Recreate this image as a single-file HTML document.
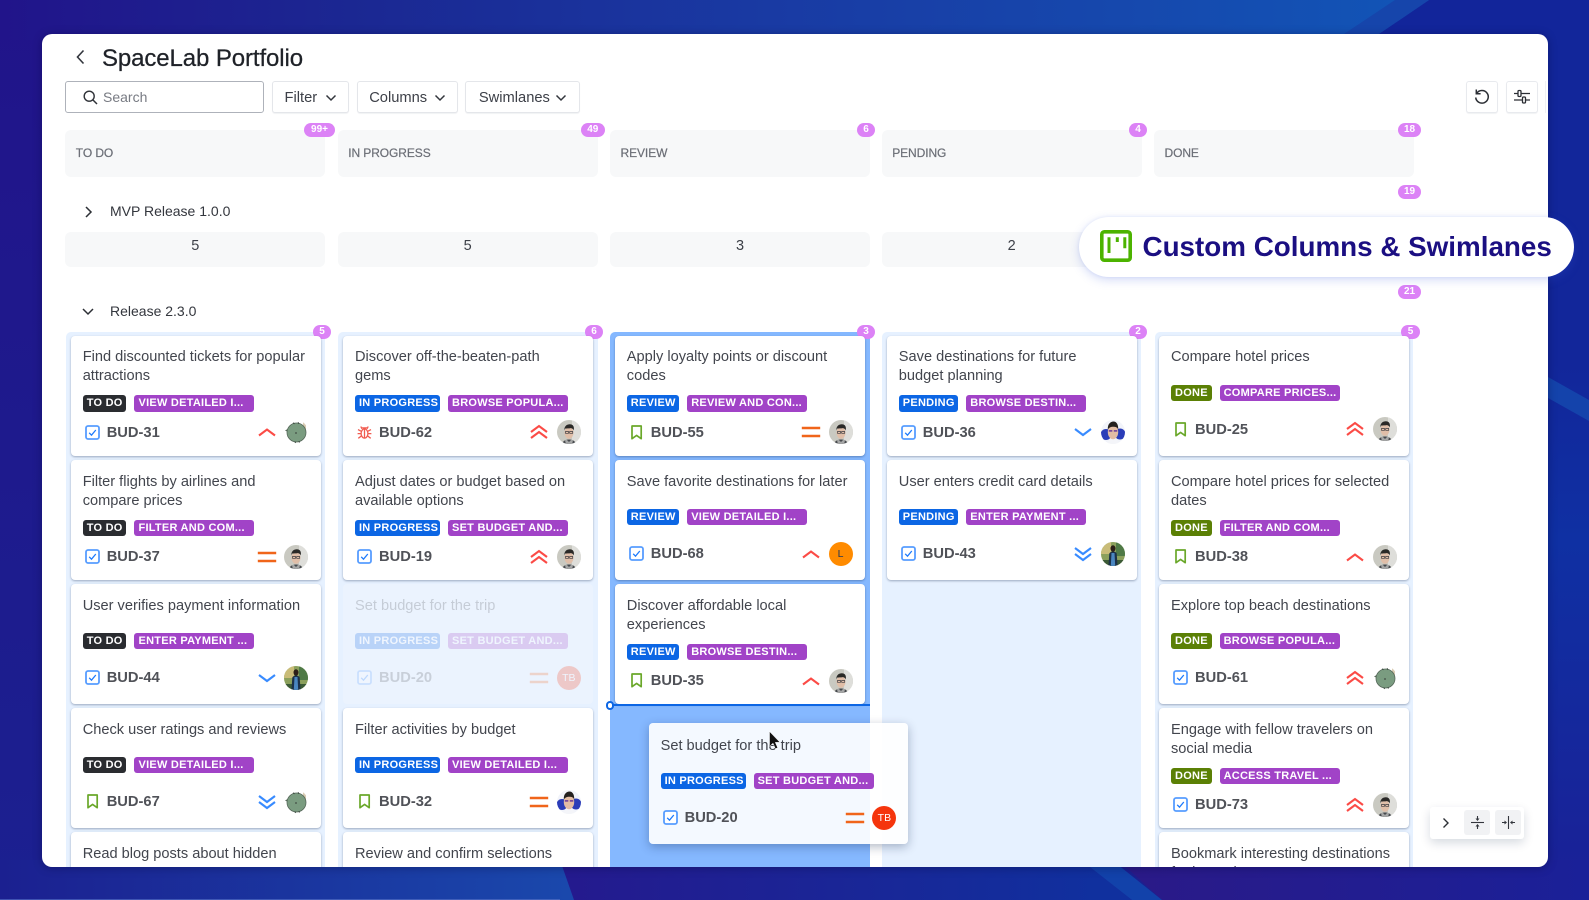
<!DOCTYPE html>
<html lang="en">
<head>
<meta charset="utf-8">
<title>SpaceLab Portfolio</title>
<style>
html,body{margin:0;padding:0;width:1589px;height:900px;overflow:hidden;background:#1a2090;font-family:"Liberation Sans",sans-serif}
#bg{position:absolute;left:0;top:0}
#panel{position:absolute;left:41.5px;top:34px;width:1506px;height:833px;background:#fff;border-radius:10px;overflow:hidden;box-shadow:0 1px 9px rgba(5,5,50,.35)}
#in{position:absolute;left:-41.5px;top:-34px;width:1589px;height:900px;overflow:hidden;filter:blur(.3px)}
.abs{position:absolute}
.title{position:absolute;left:102px;top:44.5px;font-size:24px;line-height:28px;color:#1f2228;letter-spacing:-.1px;-webkit-text-stroke:.25px #1f2228;white-space:nowrap}
.btn{position:absolute;top:81px;height:32px;box-sizing:border-box;border:1px solid #e4e6ea;border-radius:3px;background:#fff;font-size:14.7px;line-height:32.5px;color:#3d4048;padding-left:11.5px;white-space:nowrap;box-shadow:0 1px 1px rgba(9,30,66,.06)}
.search{position:absolute;left:65px;top:81px;width:199px;height:32px;box-sizing:border-box;border:1px solid #aeb2ba;border-radius:3px;font-size:14px;line-height:31px;color:#787b83;padding-left:37px}
.hd{position:absolute;top:129.5px;width:260px;height:47px;background:#f7f8f9;border-radius:6px;font-size:12px;line-height:47px;color:#6b6e76;text-indent:10.5px;letter-spacing:-.08px;-webkit-text-stroke:.2px #6b6e76}
.cell{position:absolute;top:232px;width:260px;height:35px;background:#f7f8f9;border-radius:6px;font-size:14.5px;line-height:29px;text-align:center;color:#3d4048}
.bd{position:absolute;height:14px;border-radius:7px;background:#dc82f6;color:#fff;font-size:10px;font-weight:bold;line-height:14.5px;text-align:center}
.sw{position:absolute;left:110px;font-size:14px;line-height:18px;color:#33363d;white-space:nowrap}
.col{position:absolute;top:332px;height:540px;background:#e6f1ff;border-radius:5px 5px 0 0}
.card{position:absolute;width:250px;height:120px;background:#fff;border-radius:4px;box-shadow:0 1px 2px rgba(9,30,66,.34)}
.card p{position:absolute;left:12px;top:12.8px;margin:0;font-size:14.6px;line-height:19px;color:#42454d;white-space:nowrap}
.tags{position:absolute;left:12px;height:16.4px;white-space:nowrap}
.t2 .tags{top:59.5px}.t1 .tags{top:49px}
.tag{float:left;box-sizing:border-box;height:16.4px;border-radius:3px;padding:0 4px;font-size:11px;font-weight:bold;line-height:17.2px;color:#fff;letter-spacing:.25px;overflow:hidden}
.k{background:#2a2c30;width:43.8px}.pr{background:#0c66e4;width:85px}.rv{background:#0c66e4;width:52.4px}.pe{background:#0c66e4;width:59.5px}.dn{background:#5b8005;width:40.6px}
.k,.pr,.rv,.pe,.dn{margin-right:8px}
.p{background:#a143c7;width:120px}
.ft{position:absolute;left:0;right:0;height:24px}
.t2 .ft{top:84.6px}.t1 .ft{top:81.5px}
.ty{position:absolute;left:14px;top:4.5px;width:15px;height:15px}
.id{position:absolute;left:36px;top:.5px;font-size:14.7px;font-weight:bold;line-height:24px;color:#505258;white-space:nowrap}
.pi{position:absolute;left:186px;top:4px;width:20px;height:16px}
.av{position:absolute;left:213.8px;top:0;width:24px;height:24px;border-radius:50%;overflow:hidden}
.lt{text-align:center;font-size:10.5px;line-height:24px}
.ghost{background:#ebf3fe;box-shadow:none}
.ghost>*{opacity:.22}
.last{height:40px;overflow:hidden}
.pill{position:absolute;left:1079px;top:217px;width:495px;height:59.5px;background:#fff;border-radius:30px;box-shadow:0 3px 10px rgba(60,90,220,.22),0 0 3px rgba(60,90,220,.1);z-index:5}
.pill span{position:absolute;left:63.5px;top:12px;font-size:27.8px;line-height:36px;font-weight:bold;color:#1b0f82;white-space:nowrap}
.rb{position:absolute;top:81px;width:32px;height:32px;box-sizing:border-box;border:1px solid #e8eaee;border-radius:3px;background:#fff;box-shadow:0 1px 1px rgba(9,30,66,.06)}
.wd{position:absolute;left:1430px;top:807px;width:93.5px;height:31.5px;background:#fff;border-radius:3px;box-shadow:0 4px 10px rgba(9,30,66,.16)}
.wb{position:absolute;top:3px;width:25.5px;height:25px;background:#f1f2f4;border-radius:3px}
</style>
</head>
<body>
<svg id="bg" width="1589" height="900" viewBox="0 0 1589 900">
<defs>
<linearGradient id="gt" x1="0" x2="1400" y1="0" y2="0" gradientUnits="userSpaceOnUse"><stop offset="0" stop-color="#21148a"/><stop offset=".25" stop-color="#1b2792"/><stop offset=".55" stop-color="#193aa3"/><stop offset=".8" stop-color="#1648ad"/><stop offset="1" stop-color="#1254b6"/></linearGradient>
<linearGradient id="gl" x1="0" x2="0" y1="0" y2="900" gradientUnits="userSpaceOnUse"><stop offset="0" stop-color="#21148a"/><stop offset="1" stop-color="#1b2090"/></linearGradient>
<linearGradient id="gb" x1="0" x2="570" y1="0" y2="0" gradientUnits="userSpaceOnUse"><stop offset="0" stop-color="#1b2090"/><stop offset="1" stop-color="#1a48ac"/></linearGradient>
<linearGradient id="gm" x1="570" x2="1100" y1="0" y2="0" gradientUnits="userSpaceOnUse"><stop offset="0" stop-color="#241a8e"/><stop offset="1" stop-color="#10309e"/></linearGradient>
<linearGradient id="gr" x1="1140" x2="1589" y1="0" y2="0" gradientUnits="userSpaceOnUse"><stop offset="0" stop-color="#2a1a88"/><stop offset="1" stop-color="#1a2098"/></linearGradient>
<linearGradient id="grs" x1="0" x2="0" y1="0" y2="900" gradientUnits="userSpaceOnUse"><stop offset="0" stop-color="#12269a"/><stop offset=".4" stop-color="#12269a"/><stop offset=".6" stop-color="#0f30a3"/><stop offset="1" stop-color="#1a2096"/></linearGradient>
</defs>
<rect width="1589" height="900" fill="url(#gl)"/>
<rect width="1589" height="40" fill="url(#gt)"/>
<polygon points="1429,0 1589,0 1589,40 1370,40" fill="#12259a"/>
<polygon points="1395,0 1429,0 1370,40 1335,40" fill="#1645ab"/>
<rect x="1547" y="30" width="42" height="870" fill="url(#grs)"/>
<polygon points="1548,377 1589,400 1589,421 1548,398" fill="#1443ab"/>
<rect y="860" width="580" height="40" fill="url(#gb)"/>
<polygon points="560,860 1081,860 1132,900 574,900" fill="url(#gm)"/>
<polygon points="1118,860 1589,860 1589,900 1162,900" fill="url(#gr)"/>
<polygon points="1081,860 1112,860 1162,900 1132,900" fill="#1242aa"/>
<rect y="899" width="560" height="1" fill="#5a74c8" opacity=".6"/>
</svg>

<svg width="0" height="0" style="position:absolute">
<defs>
<symbol id="task" viewBox="0 0 15 15"><rect x="1" y="1" width="13" height="13" rx="2" fill="#fff" stroke="#579dff" stroke-width="1.8"/><path d="M4.2 7.8l2.3 2.4 4.3-5.2" fill="none" stroke="#1d7afc" stroke-width="1.3"/></symbol>
<symbol id="story" viewBox="0 0 15 15"><path d="M3 1h9.200v12.700L7.600 10.400 3 13.700z" fill="#fff" stroke="#6aa82a" stroke-width="1.700" stroke-linejoin="round"/></symbol>
<symbol id="bug" viewBox="0 0 15 15"><g fill="none" stroke="#f15b50" stroke-width="1.300"><ellipse cx="7.500" cy="8.500" rx="3.400" ry="4.600"/><path d="M5 3.800L3.800 1.500M10 3.800l1.200-2.300M4.800 2.900h5.400M4 6.200L1 4.600M11 6.200l3-1.600M4 8.600H.6M11 8.600h3.400M4.300 11l-3 2.300M10.700 11l3 2.300M7.500 4v9"/></g></symbol>
<symbol id="pup" viewBox="0 0 20 16"><path d="M2 11.500l8-6 8 6" fill="none" stroke="#fb4b46" stroke-width="2.100"/></symbol>
<symbol id="phi" viewBox="0 0 20 16"><path d="M2 8l8-6 8 6M2 14l8-6 8 6" fill="none" stroke="#fb4b46" stroke-width="2.100"/></symbol>
<symbol id="pme" viewBox="0 0 20 16"><path d="M.8 4h18.400M.8 12h18.400" fill="none" stroke="#f0651a" stroke-width="2.400"/></symbol>
<symbol id="plo" viewBox="0 0 20 16"><path d="M2 5l8 6 8-6" fill="none" stroke="#388bff" stroke-width="2.100"/></symbol>
<symbol id="pll" viewBox="0 0 20 16"><path d="M2 2l8 6 8-6M2 8l8 6 8-6" fill="none" stroke="#388bff" stroke-width="2.100"/></symbol>
<symbol id="man" viewBox="0 0 24 24"><rect width="24" height="24" fill="#c9c9c1"/><rect x="15" width="9" height="24" fill="#dededa"/><path d="M5 24c1-3.500 4-4.500 7-4.500s6 1 7 4.500z" fill="#474a4e"/><path d="M9.500 19.500l2.500 2.500 2.500-2.500 1.500 1-1 3.500H9l-1-3.500z" fill="#a5a6a6"/><ellipse cx="12" cy="12.800" rx="4.500" ry="6" fill="#e0bea8"/><path d="M7.400 10.500C7 6 10 4.200 12.800 4.200c3 0 4.700 2 4 6.300-.6-1.500-1.500-2.200-3-2.400-2 .4-4.800.3-5.500.4-.4.500-.7 1-.9 2z" fill="#2a2927"/><path d="M8.500 11.500h3v1.800h-3zM12.700 11.500h3v1.800h-3z" fill="none" stroke="#3a3a3e" stroke-width=".7"/></symbol>
<symbol id="grn" viewBox="0 0 24 24"><rect width="24" height="24" fill="#fff"/><path d="M19 2l3 0 0 9-3-1z" fill="#dacdb4"/><path d="M1 10.500l3.500-2-.5 3.500z" fill="#5a6c5c"/><circle cx="12.500" cy="12.500" r="9.500" fill="#7a9c80" stroke="#56685a" stroke-width=".8"/><circle cx="12" cy="13" r="1" fill="#4e6052"/><path d="M9 2.800l1.500 1M14 2.300l1 1.500M11 21.500l.5 1.500M15 21l.5 1.500" stroke="#3d4a40" stroke-width="1"/></symbol>
<symbol id="blu" viewBox="0 0 24 24"><rect width="24" height="24" fill="#f2f4fa"/><circle cx="5" cy="14.500" r="5.500" fill="#2b3db8"/><circle cx="19" cy="14" r="5.500" fill="#2b3db8"/><path d="M6 24c1-4 3-5 6-5s5 1 6 5z" fill="#f4f5f9"/><ellipse cx="12" cy="12" rx="5.200" ry="7.300" fill="#e3bca4"/><path d="M6.800 9.500C6.500 4 9.500 1.500 12.500 1.500s5 3 4.700 8c-1-2.500-2.500-2.800-5-2.800s-4 .8-5.400 2.800z" fill="#23201f"/><path d="M7.800 10h3.500v1.800H7.800zM12.800 10h3.500v1.800h-3.500z" fill="#7b4b9a"/></symbol>
<symbol id="lnd" viewBox="0 0 24 24"><rect width="24" height="24" fill="#8ba05c"/><rect width="10" height="12" fill="#c9bc78"/><rect x="15" width="9" height="14" fill="#4f7a46"/><rect y="18" width="24" height="6" fill="#3b5a36"/><path d="M7.500 24l.8-12.500c1-1.500 2.200-2 3.700-2s3 .5 3.700 2l.8 12.500z" fill="#1c3148"/><path d="M10.500 11h3l.7 13h-4.400z" fill="#4a86c0"/><ellipse cx="12" cy="6.500" rx="2.500" ry="3.200" fill="#2c1f18"/></symbol>
</defs>
</svg>

<div id="panel"><div id="in">

<svg class="abs" style="left:72px;top:47px" width="18" height="20" viewBox="0 0 18 20"><path d="M11.500 3.500L5.500 10l6 6.500" fill="none" stroke="#33363d" stroke-width="1.600"/></svg>
<div class="title">SpaceLab Portfolio</div>

<div class="search">Search</div>
<svg class="abs" style="left:83px;top:90px" width="15" height="15" viewBox="0 0 15 15"><circle cx="6.200" cy="6.200" r="5" fill="none" stroke="#2f3238" stroke-width="1.400"/><path d="M10 10l4 4" stroke="#2f3238" stroke-width="1.500"/></svg>

<div class="btn" style="left:272px;width:77px">Filter<svg class="abs" style="left:52px;top:11px" width="12" height="10" viewBox="0 0 12 10"><path d="M1.500 2.500L6 7l4.500-4.500" fill="none" stroke="#33363d" stroke-width="1.500"/></svg></div>
<div class="btn" style="left:356.700px;width:101.500px">Columns<svg class="abs" style="left:76.500px;top:11px" width="12" height="10" viewBox="0 0 12 10"><path d="M1.500 2.500L6 7l4.500-4.500" fill="none" stroke="#33363d" stroke-width="1.500"/></svg></div>
<div class="btn" style="left:465.400px;width:114.500px;padding-left:12.500px">Swimlanes<svg class="abs" style="left:89px;top:11px" width="12" height="10" viewBox="0 0 12 10"><path d="M1.500 2.500L6 7l4.500-4.500" fill="none" stroke="#33363d" stroke-width="1.500"/></svg></div>

<div class="rb" style="left:1466px"><svg class="abs" style="left:6px;top:6px" width="18" height="18" viewBox="0 0 18 18"><path d="M3.800 5.200A6.300 6.300 0 1 1 2.700 9.500" fill="none" stroke="#2c2f35" stroke-width="1.500"/><path d="M3.300 1.500v4.300h4.300" fill="none" stroke="#2c2f35" stroke-width="1.500"/></svg></div>
<div class="rb" style="left:1506px"><svg class="abs" style="left:6px;top:6px" width="18" height="18" viewBox="0 0 18 18"><g fill="none" stroke="#2c2f35" stroke-width="1.300"><path d="M1 5.500h3.500M8.500 5.500H17M1 12h8M13 12h4"/><rect x="5" y="2.500" width="3" height="6" rx="1"/><rect x="9.500" y="9" width="3" height="6" rx="1"/></g></svg></div>
<div class="abs" style="left:1545px;top:81px;width:4px;height:32px;border-left:1px solid #f0f1f3"></div>

<div class="hd" style="left:65.300px">TO DO</div>
<div class="hd" style="left:337.700px">IN PROGRESS</div>
<div class="hd" style="left:610px">REVIEW</div>
<div class="hd" style="left:881.700px">PENDING</div>
<div class="hd" style="left:1154px">DONE</div>

<div class="bd" style="left:304px;top:122.500px;width:31px">99+</div>
<div class="bd" style="left:580.500px;top:122.500px;width:24.500px">49</div>
<div class="bd" style="left:857px;top:122.500px;width:18px">6</div>
<div class="bd" style="left:1129px;top:122.500px;width:18px">4</div>
<div class="bd" style="left:1398px;top:122.500px;width:23px">18</div>
<div class="bd" style="left:1398px;top:184.700px;width:23px">19</div>
<div class="bd" style="left:1398px;top:285px;width:23px">21</div>

<svg class="abs" style="left:82px;top:205px" width="12" height="14" viewBox="0 0 12 14"><path d="M4 2l5 5-5 5" fill="none" stroke="#2c2f35" stroke-width="1.500"/></svg>
<div class="sw" style="top:202px">MVP Release 1.0.0</div>
<div class="cell" style="left:65.300px">5</div>
<div class="cell" style="left:337.700px">5</div>
<div class="cell" style="left:610px">3</div>
<div class="cell" style="left:881.700px">2</div>
<svg class="abs" style="left:81px;top:306px" width="14" height="12" viewBox="0 0 14 12"><path d="M2 3l5 5 5-5" fill="none" stroke="#2c2f35" stroke-width="1.500"/></svg>
<div class="sw" style="top:302px">Release 2.3.0</div>

<div class="col" style="left:66px;width:259.300px"></div>
<div class="col" style="left:338px;width:259.500px"></div>
<div class="col" style="left:610px;width:260px;background:#85b8ff"></div>
<div class="col" style="left:882px;width:259px"></div>
<div class="col" style="left:1155px;width:258px"></div>

<div class="bd" style="left:313px;top:325px;width:18px">5</div>
<div class="bd" style="left:585px;top:325px;width:18px">6</div>
<div class="bd" style="left:857px;top:325px;width:18px">3</div>
<div class="bd" style="left:1129px;top:325px;width:18px">2</div>
<div class="bd" style="left:1401px;top:325px;width:19px">5</div>

<!-- Column 1 -->
<div class="abs" style="left:70.700px;top:0">
<div class="card t2" style="top:335.700px"><p>Find discounted tickets for popular<br>attractions</p><div class="tags"><span class="tag k">TO DO</span><span class="tag p">VIEW DETAILED I...</span></div><div class="ft"><svg class="ty"><use href="#task"/></svg><span class="id">BUD-31</span><svg class="pi"><use href="#pup"/></svg><svg class="av"><use href="#grn"/></svg></div></div>
<div class="card t2" style="top:460px"><p>Filter flights by airlines and<br>compare prices</p><div class="tags"><span class="tag k">TO DO</span><span class="tag p">FILTER AND COM...</span></div><div class="ft"><svg class="ty"><use href="#task"/></svg><span class="id">BUD-37</span><svg class="pi"><use href="#pme"/></svg><svg class="av"><use href="#man"/></svg></div></div>
<div class="card t1" style="top:584px"><p>User verifies payment information</p><div class="tags"><span class="tag k">TO DO</span><span class="tag p">ENTER PAYMENT ...</span></div><div class="ft"><svg class="ty"><use href="#task"/></svg><span class="id">BUD-44</span><svg class="pi"><use href="#plo"/></svg><svg class="av"><use href="#lnd"/></svg></div></div>
<div class="card t1" style="top:708px"><p>Check user ratings and reviews</p><div class="tags"><span class="tag k">TO DO</span><span class="tag p">VIEW DETAILED I...</span></div><div class="ft"><svg class="ty"><use href="#story"/></svg><span class="id">BUD-67</span><svg class="pi"><use href="#pll"/></svg><svg class="av"><use href="#grn"/></svg></div></div>
<div class="card t2 last" style="top:832.300px"><p>Read blog posts about hidden<br>gems</p></div>
</div>

<!-- Column 2 -->
<div class="abs" style="left:343px;top:0">
<div class="card t2" style="top:335.700px"><p>Discover off-the-beaten-path<br>gems</p><div class="tags"><span class="tag pr">IN PROGRESS</span><span class="tag p">BROWSE POPULA...</span></div><div class="ft"><svg class="ty"><use href="#bug"/></svg><span class="id">BUD-62</span><svg class="pi"><use href="#phi"/></svg><svg class="av"><use href="#man"/></svg></div></div>
<div class="card t2" style="top:460px"><p>Adjust dates or budget based on<br>available options</p><div class="tags"><span class="tag pr">IN PROGRESS</span><span class="tag p">SET BUDGET AND...</span></div><div class="ft"><svg class="ty"><use href="#task"/></svg><span class="id">BUD-19</span><svg class="pi"><use href="#phi"/></svg><svg class="av"><use href="#man"/></svg></div></div>
<div class="card t1 ghost" style="top:584px"><p>Set budget for the trip</p><div class="tags"><span class="tag pr">IN PROGRESS</span><span class="tag p">SET BUDGET AND...</span></div><div class="ft"><svg class="ty"><use href="#task"/></svg><span class="id">BUD-20</span><svg class="pi"><use href="#pme"/></svg><div class="av lt" style="background:#f5350d;color:#fff">TB</div></div></div>
<div class="card t1" style="top:708px"><p>Filter activities by budget</p><div class="tags"><span class="tag pr">IN PROGRESS</span><span class="tag p">VIEW DETAILED I...</span></div><div class="ft"><svg class="ty"><use href="#story"/></svg><span class="id">BUD-32</span><svg class="pi"><use href="#pme"/></svg><svg class="av"><use href="#blu"/></svg></div></div>
<div class="card t2 last" style="top:832.300px"><p>Review and confirm selections</p></div>
</div>

<!-- Column 3 -->
<div class="abs" style="left:614.800px;top:0">
<div class="card t2" style="top:335.700px"><p>Apply loyalty points or discount<br>codes</p><div class="tags"><span class="tag rv">REVIEW</span><span class="tag p">REVIEW AND CON...</span></div><div class="ft"><svg class="ty"><use href="#story"/></svg><span class="id">BUD-55</span><svg class="pi"><use href="#pme"/></svg><svg class="av"><use href="#man"/></svg></div></div>
<div class="card t1" style="top:460px"><p>Save favorite destinations for later</p><div class="tags"><span class="tag rv">REVIEW</span><span class="tag p">VIEW DETAILED I...</span></div><div class="ft"><svg class="ty"><use href="#task"/></svg><span class="id">BUD-68</span><svg class="pi"><use href="#pup"/></svg><div class="av lt" style="background:#ff8b00;color:#253858">L</div></div></div>
<div class="card t2" style="top:584px"><p>Discover affordable local<br>experiences</p><div class="tags"><span class="tag rv">REVIEW</span><span class="tag p">BROWSE DESTIN...</span></div><div class="ft"><svg class="ty"><use href="#story"/></svg><span class="id">BUD-35</span><svg class="pi"><use href="#pup"/></svg><svg class="av"><use href="#man"/></svg></div></div>
</div>
<div class="abs" style="left:610px;top:704.300px;width:260px;height:2px;background:#0c66e4"></div>
<div class="abs" style="left:605.500px;top:701px;width:8.500px;height:8.500px;box-sizing:border-box;border:2px solid #0c66e4;border-radius:50%;background:#fff"></div>

<!-- Column 4 -->
<div class="abs" style="left:886.800px;top:0">
<div class="card t2" style="top:335.700px"><p>Save destinations for future<br>budget planning</p><div class="tags"><span class="tag pe">PENDING</span><span class="tag p">BROWSE DESTIN...</span></div><div class="ft"><svg class="ty"><use href="#task"/></svg><span class="id">BUD-36</span><svg class="pi"><use href="#plo"/></svg><svg class="av"><use href="#blu"/></svg></div></div>
<div class="card t1" style="top:460px"><p>User enters credit card details</p><div class="tags"><span class="tag pe">PENDING</span><span class="tag p">ENTER PAYMENT ...</span></div><div class="ft"><svg class="ty"><use href="#task"/></svg><span class="id">BUD-43</span><svg class="pi"><use href="#pll"/></svg><svg class="av"><use href="#lnd"/></svg></div></div>
</div>

<!-- Column 5 -->
<div class="abs" style="left:1159px;top:0">
<div class="card t1" style="top:335.700px"><p>Compare hotel prices</p><div class="tags"><span class="tag dn">DONE</span><span class="tag p">COMPARE PRICES...</span></div><div class="ft"><svg class="ty"><use href="#story"/></svg><span class="id">BUD-25</span><svg class="pi"><use href="#phi"/></svg><svg class="av"><use href="#man"/></svg></div></div>
<div class="card t2" style="top:460px"><p>Compare hotel prices for selected<br>dates</p><div class="tags"><span class="tag dn">DONE</span><span class="tag p">FILTER AND COM...</span></div><div class="ft"><svg class="ty"><use href="#story"/></svg><span class="id">BUD-38</span><svg class="pi"><use href="#pup"/></svg><svg class="av"><use href="#man"/></svg></div></div>
<div class="card t1" style="top:584px"><p>Explore top beach destinations</p><div class="tags"><span class="tag dn">DONE</span><span class="tag p">BROWSE POPULA...</span></div><div class="ft"><svg class="ty"><use href="#task"/></svg><span class="id">BUD-61</span><svg class="pi"><use href="#phi"/></svg><svg class="av"><use href="#grn"/></svg></div></div>
<div class="card t2" style="top:708px"><p>Engage with fellow travelers on<br>social media</p><div class="tags"><span class="tag dn">DONE</span><span class="tag p">ACCESS TRAVEL ...</span></div><div class="ft"><svg class="ty"><use href="#task"/></svg><span class="id">BUD-73</span><svg class="pi"><use href="#phi"/></svg><svg class="av"><use href="#man"/></svg></div></div>
<div class="card t2 last" style="top:832.300px"><p>Bookmark interesting destinations<br>for later trips</p></div>
</div>

<!-- Widget -->
<div class="wd">
<svg class="abs" style="left:10px;top:9px" width="12" height="14" viewBox="0 0 12 14"><path d="M3.500 2.500L8 7l-4.500 4.500" fill="none" stroke="#2c2f35" stroke-width="1.400"/></svg>
<div class="wb" style="left:34px"><svg class="abs" style="left:5.500px;top:5px" width="15" height="15" viewBox="0 0 15 15"><path d="M1 7.500h13" stroke="#33363d" stroke-width="1.100"/><path d="M7.500 1v3.800M7.500 10.200V14" stroke="#33363d" stroke-width="1.100"/><path d="M5.500 3.500h4l-2 2.500zM5.500 11.500h4l-2-2.500z" fill="#33363d"/></svg></div>
<div class="wb" style="left:65px"><svg class="abs" style="left:5.500px;top:5px" width="15" height="15" viewBox="0 0 15 15"><path d="M7.500 1v13" stroke="#33363d" stroke-width="1.100"/><path d="M1 7.500h3.800M10.200 7.500H14" stroke="#33363d" stroke-width="1.100"/><path d="M3.500 5.500v4L6 7.500zM11.500 5.500v4L9 7.500z" fill="#33363d"/></svg></div>
</div>

<!-- Dragged card -->
<div class="card" style="left:648.600px;top:723.300px;width:259.600px;height:120.400px;background:rgba(255,255,255,.91);box-shadow:0 3px 10px rgba(9,30,66,.3);z-index:3">
<p style="top:13.800px">Set budget for the trip</p>
<div class="tags" style="top:49.400px"><span class="tag pr">IN PROGRESS</span><span class="tag p">SET BUDGET AND...</span></div>
<div class="ft" style="top:82.400px"><svg class="ty" style="left:14.800px"><use href="#task"/></svg><span class="id">BUD-20</span><svg class="pi" style="left:196px"><use href="#pme"/></svg><div class="av lt" style="left:223.800px;background:#f5350d;color:#fff">TB</div></div>
</div>
<svg class="abs" style="left:767px;top:730px;z-index:4" width="14" height="21" viewBox="0 0 14 21"><path d="M2.500 1.500v15l3.500-3.300 2.400 5.600 2.300-1-2.400-5.400h4.700z" fill="#111" stroke="#fff" stroke-width=".5"/></svg>

</div></div>

<!-- Callout pill -->
<div class="pill">
<svg class="abs" style="left:21px;top:13px" width="32" height="32" viewBox="0 0 32 32"><rect x="1.800" y="1.800" width="28.400" height="28.400" rx="2.500" fill="#fff" stroke="#4cb300" stroke-width="3.600"/><path d="M9 7.300V23M17.300 7.300v4.700M24.800 7.300v11" fill="none" stroke="#4cb300" stroke-width="3"/></svg>
<span>Custom Columns &amp; Swimlanes</span>
</div>
</body>
</html>
